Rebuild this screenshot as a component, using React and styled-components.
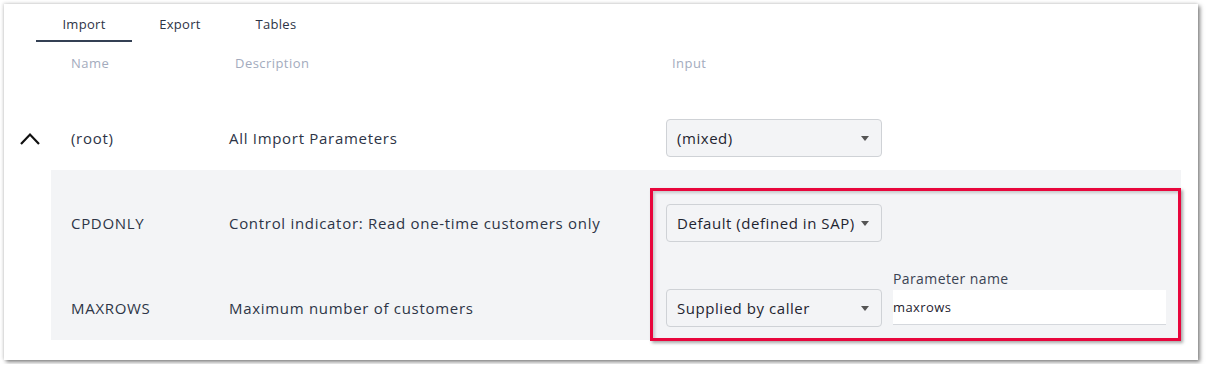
import React from "react";
import styled, { createGlobalStyle } from "styled-components";

const GlobalStyle = createGlobalStyle`
  body {
    margin: 0;
    background: #fff;
    font-family: "Open Sans", "Liberation Sans", sans-serif;
  }
`;

const rows = [
  { name: "CPDONLY", desc: "Control indicator: Read one-time customers only", value: "Default (defined in SAP)" },
  { name: "MAXROWS", desc: "Maximum number of customers", value: "Supplied by caller", param: "maxrows" },
];

const ChevronUp = () => (
  <svg width="22" height="13" viewBox="0 0 22 13">
    <path d="M2 12 L11 2.5 L20 12" fill="none" stroke="#111" strokeWidth="2.2" />
  </svg>
);

const Select = ({ value }) => (
  <SelectBox>
    <span>{value}</span>
    <Caret />
  </SelectBox>
);

const App = () => {
  return (
    <>
      <GlobalStyle />
      <Card>
        <Tabs>
          <Tab active>Import</Tab>
          <Tab>Export</Tab>
          <Tab>Tables</Tab>
        </Tabs>
        <HeaderRow>
          <Gutter />
          <Cols>
            <HeadCell>Name</HeadCell>
            <HeadCell shift>Description</HeadCell>
            <HeadCell shift>Input</HeadCell>
          </Cols>
        </HeaderRow>
        <RootRow>
          <Gutter>
            <ChevronUp />
          </Gutter>
          <Cols>
            <Cell>(root)</Cell>
            <Cell>All Import Parameters</Cell>
            <Select value="(mixed)" />
          </Cols>
        </RootRow>
        <Group>
          {rows.map((r) => (
            <ChildRow key={r.name}>
              <Cell>{r.name}</Cell>
              <Cell>{r.desc}</Cell>
              <Select value={r.value} />
              {r.param && (
                <ParamField>
                  <ParamLabel>Parameter name</ParamLabel>
                  <ParamInput>{r.param}</ParamInput>
                </ParamField>
              )}
            </ChildRow>
          ))}
          <Highlight />
        </Group>
      </Card>
    </>
  );
};

export default App;

const Card = styled.div`
  margin: 4px;
  width: 1194px;
  height: 356px;
  box-sizing: border-box;
  background: #fff;
  box-shadow: 2px 2px 4px rgba(0, 0, 0, 0.5), -1px -1px 3px rgba(0, 0, 0, 0.12);
  color: #2d3446;
`;
const Tabs = styled.div`
  display: flex;
  padding-left: 32px;
  height: 38px;
`;
const Tab = styled.div`
  width: 96px;
  box-sizing: border-box;
  padding-top: 11px;
  text-align: center;
  font-size: 13px;
  letter-spacing: 0.3px;
  color: #2d3446;
  border-bottom: 2px solid ${(p) => (p.active ? "#344054" : "transparent")};
  height: 38px;
`;
const HeaderRow = styled.div`
  display: flex;
  align-items: center;
  height: 42px;
`;
const Gutter = styled.div`
  width: 47px;
  flex-shrink: 0;
  display: flex;
  align-items: center;
  justify-content: center;
  padding-left: 5px;
  box-sizing: border-box;
`;
const Cols = styled.div`
  display: grid;
  grid-template-columns: 158px 437px 216px;
  align-items: center;
  padding-left: 20px;
`;
const HeadCell = styled.div`
  font-size: 13px;
  letter-spacing: 0.45px;
  color: #a3abbd;
  padding-left: ${(p) => (p.shift ? "6px" : "0")};
`;
const RootRow = styled.div`
  display: flex;
  align-items: flex-end;
  height: 86px;
  box-sizing: border-box;
  padding-bottom: 13px;
  & > ${Gutter} {
    height: 38px;
  }
`;
const Cell = styled.div`
  font-size: 15px;
  letter-spacing: 0.7px;
  color: #2d3446;
`;
const SelectBox = styled.div`
  height: 38px;
  box-sizing: border-box;
  border: 1px solid #cfd2d6;
  border-radius: 4px;
  background: #f3f4f6;
  display: flex;
  align-items: center;
  justify-content: space-between;
  padding: 0 12px 0 10px;
  font-size: 15px;
  letter-spacing: 0.55px;
  color: #1f2430;
  white-space: nowrap;
`;
const Caret = styled.span`
  width: 0;
  height: 0;
  border-left: 4px solid transparent;
  border-right: 4px solid transparent;
  border-top: 5px solid #555;
`;
const Group = styled.div`
  position: relative;
  margin-left: 47px;
  margin-right: 17px;
  background: #f3f4f6;
`;
const ChildRow = styled.div`
  display: grid;
  grid-template-columns: 158px 437px 216px 284px;
  align-items: end;
  height: 85px;
  box-sizing: border-box;
  padding: 0 0 13px 20px;
  & > ${Cell} {
    line-height: 38px;
  }
`;
const ParamField = styled.div`
  margin-left: 11px;
  margin-bottom: 2px;
  display: flex;
  flex-direction: column;
`;
const ParamLabel = styled.div`
  font-size: 14px;
  letter-spacing: 0.4px;
  color: #3a4252;
  margin-bottom: 2px;
`;
const ParamInput = styled.div`
  height: 35px;
  box-sizing: border-box;
  background: #fff;
  border-bottom: 1px solid #d5d8dd;
  font-size: 13px;
  letter-spacing: 0.4px;
  color: #1f2430;
  padding-top: 8px;
`;
const Highlight = styled.div`
  position: absolute;
  left: 599px;
  top: 18px;
  width: 531px;
  height: 153px;
  box-sizing: border-box;
  border: 3px solid #e8063c;
  box-shadow: 2px 2px 3px rgba(0, 0, 0, 0.35), inset 2px 2px 3px rgba(0, 0, 0, 0.18);
  pointer-events: none;
`;
